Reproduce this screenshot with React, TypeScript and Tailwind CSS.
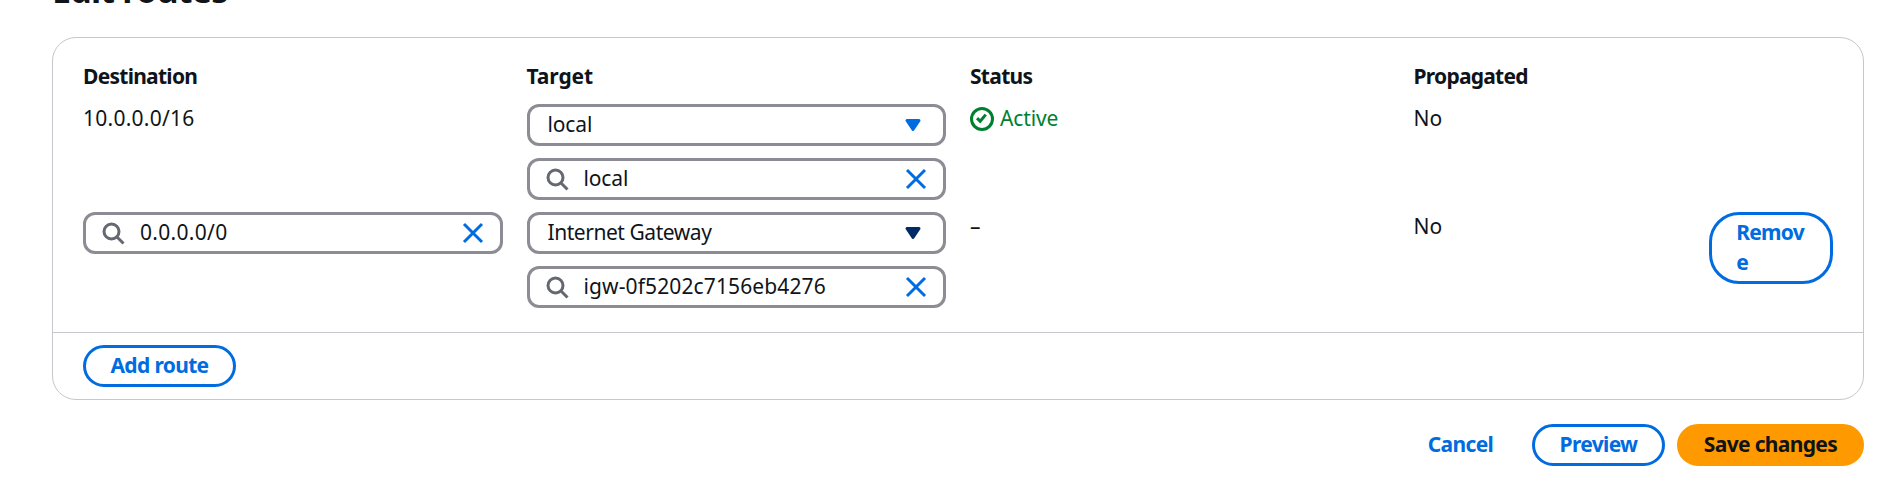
import React from "react";

function Text({ children, className = "" }: { children: React.ReactNode; className?: string }) {
  return <span className={`block whitespace-nowrap pb-[2px] leading-[28px] ${className}`}>{children}</span>;
}

function SearchIcon() {
  return (
    <svg className="size-6 shrink-0" viewBox="0 0 16 16" fill="none" stroke="#656871" strokeWidth="2">
      <circle cx="7" cy="7" r="5" />
      <path d="m15 15-4.5-4.5" />
    </svg>
  );
}

function CloseIcon() {
  return (
    <svg className="size-6 shrink-0" viewBox="0 0 16 16" fill="none" stroke="#006ce0" strokeWidth="2">
      <path d="m2 2 12 12M14 2 2 14" />
    </svg>
  );
}

function Select({ value, caret, spacing }: { value: string; caret: string; spacing: string }) {
  return (
    <div className="flex h-[42px] items-center justify-between rounded-[12px] border-[3px] border-[#8c8c94] px-[18px]">
      <Text className={spacing}>{value}</Text>
      <svg className="size-6 shrink-0" viewBox="0 0 16 16" fill={caret} stroke={caret} strokeWidth="2" strokeLinejoin="round">
        <path d="M4 5h8l-4 6-4-6z" />
      </svg>
    </div>
  );
}

function Search({ value, spacing }: { value: string; spacing: string }) {
  return (
    <div className="flex h-[42px] items-center rounded-[12px] border-[3px] border-[#8c8c94] px-[15px]">
      <SearchIcon />
      <Text className={`ml-[15px] flex-1 ${spacing}`}>{value}</Text>
      <CloseIcon />
    </div>
  );
}

function Button({ children, className }: { children: React.ReactNode; className: string }) {
  return (
    <button className={`flex h-[42px] items-center justify-center rounded-[30px] border-[3px] font-bold tracking-[-0.66px] ${className}`}>
      <Text>{children}</Text>
    </button>
  );
}

export default function App() {
  return (
    <div className="h-[498px] overflow-hidden bg-white pl-[52px] pr-[18px] font-['Noto_Sans',sans-serif] text-[21px] text-[#0f141a]">
      <h1 className="-mt-[28px] h-[65px] whitespace-nowrap text-[34px] font-bold leading-[36px] tracking-[-0.8px]">Edit routes</h1>
      <section className="h-[363px] rounded-[24px] border border-[#c6c6cd]">
        <div className="grid h-[294px] grid-cols-12 grid-rows-[30px_96px_96px] content-start gap-x-6 gap-y-3 px-[30px] pt-6">
          <Text className="col-span-3 font-bold tracking-[-0.73px]">Destination</Text>
          <Text className="col-span-3 font-bold tracking-[-0.1px]">Target</Text>
          <Text className="col-span-3 font-bold tracking-[-0.7px]">Status</Text>
          <Text className="col-span-3 font-bold tracking-[-0.75px]">Propagated</Text>

          <Text className="col-span-3 tracking-[0.25px]">10.0.0.0/16</Text>
          <div className="col-span-3 flex flex-col gap-3">
            <Select value="local" caret="#006ce0" spacing="tracking-[-0.15px]" />
            <Search value="local" spacing="tracking-[-0.15px]" />
          </div>
          <div className="col-span-3 flex h-[30px] items-center gap-[6px] text-[#00802f]">
            <svg className="size-6 shrink-0" viewBox="0 0 16 16" fill="none" stroke="currentColor" strokeWidth="2">
              <circle cx="8" cy="8" r="7" />
              <path d="m4.7 7.4 2.1 2.1 3.7-4.4" />
            </svg>
            <Text className="tracking-[-0.15px]">Active</Text>
          </div>
          <Text className="col-span-3">No</Text>

          <div className="col-span-3">
            <Search value="0.0.0.0/0" spacing="tracking-[0.3px]" />
          </div>
          <div className="col-span-3 flex flex-col gap-3">
            <Select value="Internet Gateway" caret="#002b66" spacing="tracking-[-0.45px]" />
            <Search value="igw-0f5202c7156eb4276" spacing="tracking-[0.12px]" />
          </div>
          <Text className="col-span-3">–</Text>
          <Text className="col-span-2">No</Text>
          <button className="flex h-[72px] flex-col items-start rounded-[30px] border-[3px] border-[#006ce0] px-6 pt-[3px] font-bold tracking-[-0.7px] text-[#006ce0]">
            <Text>Remov</Text>
            <Text>e</Text>
          </button>
        </div>
        <div className="border-t border-[#c6c6cd] px-[30px] pt-3">
          <Button className="w-[153px] border-[#006ce0] text-[#006ce0]">Add route</Button>
        </div>
      </section>
      <div className="mt-6 flex justify-end gap-3">
        <Button className="w-[119px] border-transparent text-[#006ce0]">Cancel</Button>
        <Button className="w-[133px] border-[#006ce0] text-[#006ce0]">Preview</Button>
        <Button className="w-[187px] border-[#ff9900] bg-[#ff9900]">Save changes</Button>
      </div>
    </div>
  );
}
